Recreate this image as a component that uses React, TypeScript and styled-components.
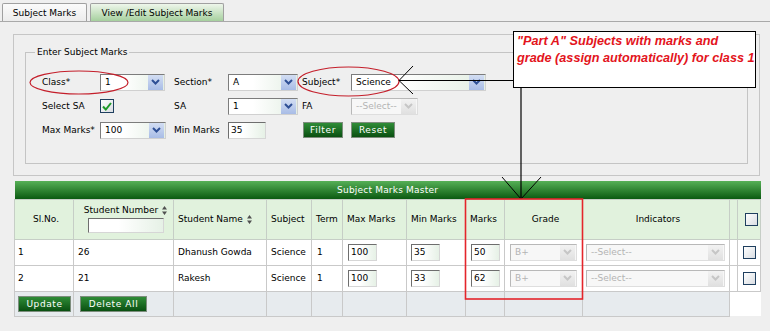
import React from "react";
import styled, { createGlobalStyle } from "styled-components";

const GlobalStyle = createGlobalStyle`
  html, body { margin: 0; padding: 0; background: #efefef; }
  body { font-family: "DejaVu Sans", Verdana, sans-serif; font-size: 9px; color: #000; }
  * { box-sizing: border-box; }
`;

const Page = styled.div`
  position: relative;
  width: 770px;
  height: 331px;
  overflow: hidden;
  background: #efefef;
`;

const TabBar = styled.div`
  display: flex;
  align-items: flex-end;
  gap: 3px;
  height: 22px;
  padding: 3px 0 0 2px;
  border-bottom: 1px solid #a9a9a9;
`;

const Tab = styled.div<{ $active?: boolean; $w: number }>`
  width: ${(p) => p.$w}px;
  height: 18px;
  display: flex;
  align-items: center;
  justify-content: center;
  border: 1px solid #a0a0a0;
  border-bottom: none;
  border-radius: 2px 2px 0 0;
  background: ${(p) =>
    p.$active ? "linear-gradient(#fbfbfb, #ececec)" : "linear-gradient(#eef6eb, #a6d09e)"};
`;

const Panel = styled.div`
  margin: 12px 0 0 13px;
  width: 747px;
  height: 142px;
  border: 1px solid #c6c6c6;
  padding: 11px;
`;

const FieldSet = styled.fieldset`
  margin: 0;
  height: 118px;
  border: 1px solid #c4c4c4;
  padding: 12px 0 0 9px;
`;

const Legend = styled.legend`
  padding: 0 2px;
  line-height: 12px;
`;

const FormGrid = styled.div`
  display: grid;
  grid-template-columns: 58px 74px 54px 74px 49px 1fr;
  grid-auto-rows: 24px;
  align-items: center;
  margin-left: 7px;
`;

const Label = styled.span``;

const SelectBox = styled.div<{ $w: number; $disabled?: boolean }>`
  display: flex;
  align-items: center;
  justify-content: space-between;
  width: ${(p) => p.$w}px;
  height: 17px;
  border: 1px solid;
  border-color: ${(p) => (p.$disabled ? "#b8b8b8 #dedede #dedede #b8b8b8" : "#7c7c7c #d0d0d0 #d0d0d0 #7c7c7c")};
  background: ${(p) => (p.$disabled ? "#f7f7f7" : "linear-gradient(90deg, #fff 35%, #e4efe4)")};
  padding-left: 4px;
  color: ${(p) => (p.$disabled ? "#b4b4b4" : "#000")};
`;

const ArrowBtn = styled.span<{ $disabled?: boolean }>`
  width: 15px;
  height: 15px;
  margin-right: 1px;
  display: flex;
  align-items: center;
  justify-content: center;
  background: ${(p) =>
    p.$disabled ? "linear-gradient(#f2f2f2, #e0e0e0)" : "linear-gradient(#d3def3, #a8bce6)"};
  color: ${(p) => (p.$disabled ? "#c6c6c6" : "#2e4f95")};
`;

const TextInput = styled.div<{ $w: number }>`
  display: flex;
  align-items: center;
  width: ${(p) => p.$w}px;
  height: 17px;
  border: 1px solid;
  border-color: #6e6e6e #d6d6d6 #d6d6d6 #6e6e6e;
  background: linear-gradient(90deg, #fff 40%, #e6f1e6);
  padding-left: 2px;
`;

const CheckBox = styled.span<{ $size: number }>`
  display: inline-flex;
  align-items: center;
  justify-content: center;
  width: ${(p) => p.$size}px;
  height: ${(p) => p.$size}px;
  border: 1px solid #1f3f5f;
  background: linear-gradient(135deg, #fff, #d9dde2);
  vertical-align: middle;
`;

const GreenButton = styled.span<{ $w: number; $ml?: number }>`
  display: inline-flex;
  align-items: center;
  justify-content: center;
  width: ${(p) => p.$w}px;
  height: 16px;
  margin-left: ${(p) => p.$ml ?? 0}px;
  border: 1px solid #7d8d7d;
  background: linear-gradient(#2f8c37, #0a5011);
  color: #fff;
  letter-spacing: 0.6px;
`;

const Grid = styled.table`
  margin: 5px 0 0 14px;
  width: 746px;
  border-collapse: collapse;
  table-layout: fixed;
`;

const TitleCell = styled.th`
  height: 18px;
  padding: 0;
  background: linear-gradient(#56b056, #0b5a11);
  color: #fff;
  font-weight: normal;
  text-align: center;
  letter-spacing: 0.2px;
`;

const HeadCell = styled.th<{ $align?: "left" | "center" }>`
  height: 40px;
  padding: 0 0 0 4px;
  background: #e1f2dd;
  border: 1px solid #c6cec6;
  font-weight: normal;
  text-align: ${(p) => p.$align ?? "left"};
  white-space: nowrap;
`;

const HeadStack = styled.div`
  display: flex;
  flex-direction: column;
  align-items: center;
  gap: 3px;
`;

const SortLabel = styled.span`
  display: inline-flex;
  align-items: center;
  gap: 4px;
`;

const Cell = styled.td<{ $pad?: number; $center?: boolean }>`
  height: 26px;
  padding: 0 0 0 ${(p) => p.$pad ?? 4}px;
  background: #fff;
  border: 1px solid #c9c9c9;
  white-space: nowrap;
  text-align: ${(p) => (p.$center ? "center" : "left")};
`;

const FootCell = styled.td<{ $pad?: number; $blank?: boolean }>`
  height: 25px;
  padding: 0 0 0 ${(p) => p.$pad ?? 3}px;
  background: ${(p) => (p.$blank ? "#fff" : "#e7ebee")};
  border: ${(p) => (p.$blank ? "none" : "1px solid #c9c9c9")};
`;

const Note = styled.div`
  position: absolute;
  left: 513px;
  top: 31px;
  width: 243px;
  height: 57px;
  background: #fff;
  border: 1px solid #000;
  padding: 1px 3px;
  color: #e3141c;
  font-family: "Liberation Sans", Arial, sans-serif;
  font-style: italic;
  font-weight: bold;
  font-size: 12.7px;
  line-height: 17px;
  white-space: nowrap;
`;

const Overlay = styled.svg`
  position: absolute;
  left: 0;
  top: 0;
  pointer-events: none;
`;

const Chevron = () => (
  <svg width="9" height="6" viewBox="0 0 9 6">
    <path d="M1 1 L4.5 4.5 L8 1" fill="none" stroke="currentColor" strokeWidth="2" />
  </svg>
);

const SortIcon = () => (
  <svg width="5" height="9" viewBox="0 0 5 9">
    <path d="M2.5 0 L5 3.5 L0 3.5 Z M2.5 9 L5 5.5 L0 5.5 Z" fill="#505050" />
  </svg>
);

const Select = ({ w, value, disabled }: { w: number; value: string; disabled?: boolean }) => (
  <SelectBox $w={w} $disabled={disabled}>
    <span>{value}</span>
    <ArrowBtn $disabled={disabled}>
      <Chevron />
    </ArrowBtn>
  </SelectBox>
);

const rows = [
  { sl: "1", num: "26", name: "Dhanush Gowda", max: "100", min: "35", marks: "50" },
  { sl: "2", num: "21", name: "Rakesh", max: "100", min: "33", marks: "62" },
];

export default function App() {
  return (
    <Page>
      <GlobalStyle />
      <TabBar>
        <Tab $active $w={85}>Subject Marks</Tab>
        <Tab $w={134}>View /Edit Subject Marks</Tab>
      </TabBar>

      <Panel>
        <FieldSet>
          <Legend>Enter Subject Marks</Legend>
          <FormGrid>
            <Label>Class*</Label>
            <Select w={65} value="1" />
            <Label>Section*</Label>
            <Select w={70} value="A" />
            <Label>Subject*</Label>
            <Select w={135} value="Science" />

            <Label>Select SA</Label>
            <span>
              <CheckBox $size={14}>
                <svg width="10" height="9" viewBox="0 0 10 9">
                  <path d="M1 4.5 L3.8 7.5 L9 1" fill="none" stroke="#1f9a2a" strokeWidth="2" />
                </svg>
              </CheckBox>
            </span>
            <Label>SA</Label>
            <Select w={70} value="1" />
            <Label>FA</Label>
            <Select w={67} value="--Select--" disabled />

            <Label>Max Marks*</Label>
            <Select w={66} value="100" />
            <Label>Min Marks</Label>
            <TextInput $w={38}>35</TextInput>
            <span>
              <GreenButton $w={40} $ml={1}>Filter</GreenButton>
            </span>
            <span>
              <GreenButton $w={44}>Reset</GreenButton>
            </span>
          </FormGrid>
        </FieldSet>
      </Panel>

      <Grid>
        <colgroup>
          <col style={{ width: 59 }} />
          <col style={{ width: 100 }} />
          <col style={{ width: 93 }} />
          <col style={{ width: 45 }} />
          <col style={{ width: 31 }} />
          <col style={{ width: 64 }} />
          <col style={{ width: 59 }} />
          <col style={{ width: 39 }} />
          <col style={{ width: 78 }} />
          <col style={{ width: 147 }} />
          <col style={{ width: 8 }} />
          <col style={{ width: 23 }} />
        </colgroup>
        <thead>
          <tr>
            <TitleCell colSpan={12}>Subject Marks Master</TitleCell>
          </tr>
          <tr>
            <HeadCell $align="center">Sl.No.</HeadCell>
            <HeadCell $align="center">
              <HeadStack>
                <SortLabel>
                  Student Number <SortIcon />
                </SortLabel>
                <TextInput $w={76} style={{ height: 15 }} />
              </HeadStack>
            </HeadCell>
            <HeadCell>
              <SortLabel>
                Student Name <SortIcon />
              </SortLabel>
            </HeadCell>
            <HeadCell>Subject</HeadCell>
            <HeadCell>Term</HeadCell>
            <HeadCell>Max Marks</HeadCell>
            <HeadCell>Min Marks</HeadCell>
            <HeadCell>Marks</HeadCell>
            <HeadCell $align="center">Grade</HeadCell>
            <HeadCell $align="center">Indicators</HeadCell>
            <HeadCell />
            <HeadCell $align="center">
              <CheckBox $size={13} />
            </HeadCell>
          </tr>
        </thead>
        <tbody>
          {rows.map((r) => (
            <tr key={r.sl}>
              <Cell $pad={3}>{r.sl}</Cell>
              <Cell>{r.num}</Cell>
              <Cell>{r.name}</Cell>
              <Cell>Science</Cell>
              <Cell $pad={5}>1</Cell>
              <Cell $pad={5}>
                <TextInput $w={29}>{r.max}</TextInput>
              </Cell>
              <Cell>
                <TextInput $w={29}>{r.min}</TextInput>
              </Cell>
              <Cell $pad={5}>
                <TextInput $w={29}>{r.marks}</TextInput>
              </Cell>
              <Cell $pad={5}>
                <Select w={67} value="B+" disabled />
              </Cell>
              <Cell $pad={3}>
                <Select w={139} value="--Select--" disabled />
              </Cell>
              <Cell />
              <Cell $pad={0} $center>
                <CheckBox $size={13} />
              </Cell>
            </tr>
          ))}
          <tr>
            <FootCell>
              <GreenButton $w={53}>Update</GreenButton>
            </FootCell>
            <FootCell $pad={6}>
              <GreenButton $w={67}>Delete All</GreenButton>
            </FootCell>
            <FootCell />
            <FootCell />
            <FootCell />
            <FootCell />
            <FootCell />
            <FootCell />
            <FootCell />
            <FootCell />
            <FootCell $blank colSpan={2} />
          </tr>
        </tbody>
      </Grid>

      <Note>
        "Part A" Subjects with marks and
        <br />
        grade (assign automatically) for class 1
      </Note>

      <Overlay width="770" height="331" viewBox="0 0 770 331">
        <ellipse cx="79" cy="82.5" rx="49" ry="11.5" fill="none" stroke="#c41e2a" strokeWidth="1.2" />
        <ellipse cx="348.5" cy="81.5" rx="50.5" ry="14.5" fill="none" stroke="#c41e2a" strokeWidth="1.2" />
        <line x1="399" y1="80.5" x2="513" y2="80.5" stroke="#000" strokeWidth="1.2" />
        <line x1="399" y1="80.5" x2="413" y2="66" stroke="#000" strokeWidth="1" />
        <line x1="399" y1="80.5" x2="413" y2="94" stroke="#000" strokeWidth="1" />
        <line x1="521" y1="88" x2="521" y2="199" stroke="#000" strokeWidth="1.2" />
        <line x1="521" y1="199" x2="502" y2="177" stroke="#000" strokeWidth="1" />
        <line x1="521" y1="199" x2="541" y2="177" stroke="#000" strokeWidth="1" />
        <rect x="465.5" y="199" width="117" height="100" fill="none" stroke="#e4252b" strokeWidth="1.6" />
      </Overlay>
    </Page>
  );
}
